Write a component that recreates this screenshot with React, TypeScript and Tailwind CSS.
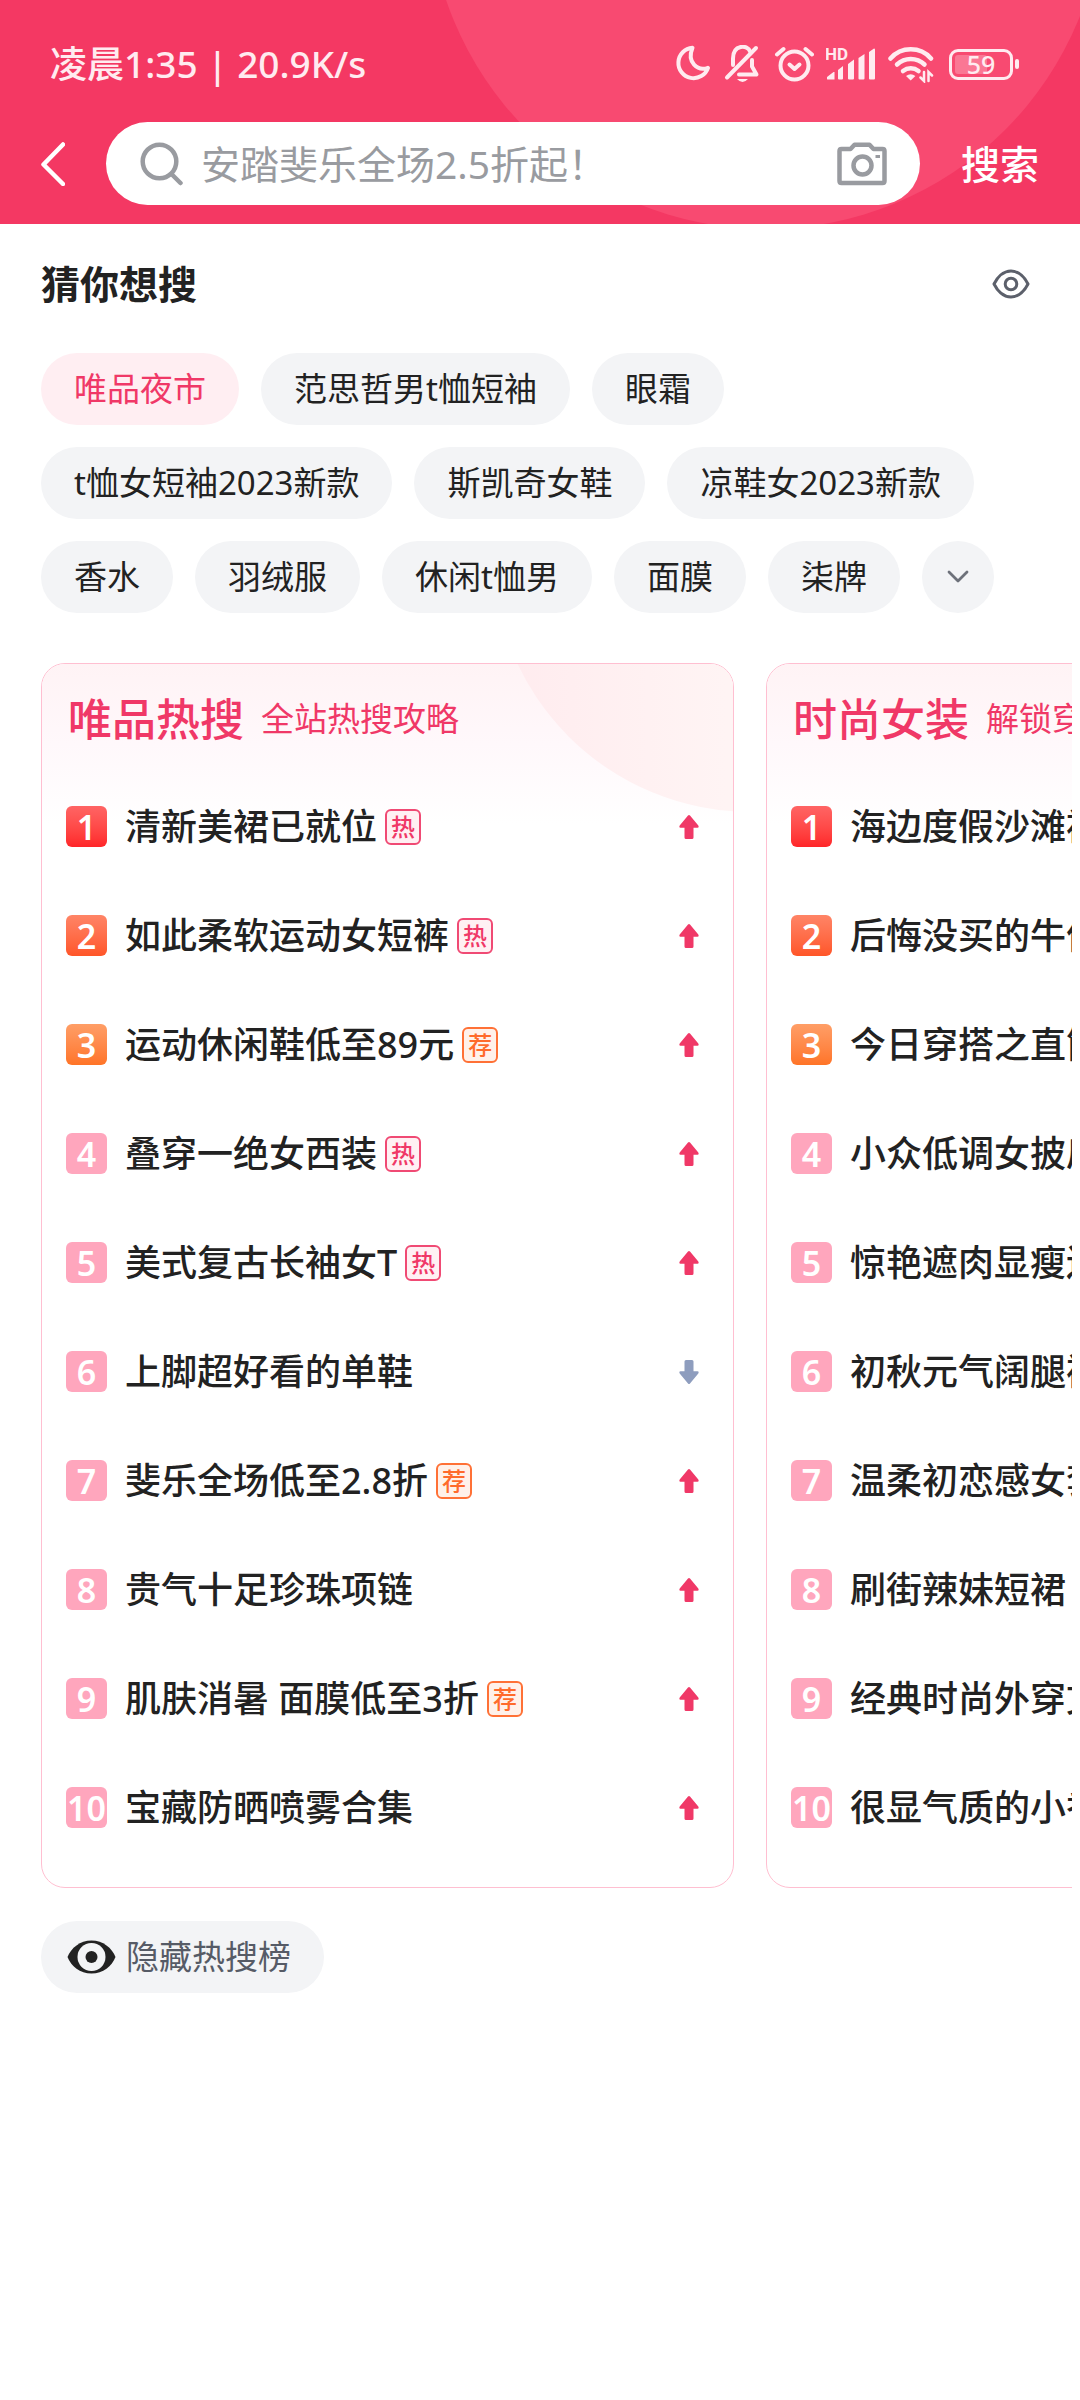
import React from "react";

type Tag = "热" | "荐";

interface HotItem {
  text: string;
  tag?: Tag;
  down?: boolean;
}

interface HotBoard {
  title: string;
  subtitle: string;
  items: HotItem[];
}

const suggestions: string[] = [
  "唯品夜市",
  "范思哲男t恤短袖",
  "眼霜",
  "t恤女短袖2023新款",
  "斯凯奇女鞋",
  "凉鞋女2023新款",
  "香水",
  "羽绒服",
  "休闲t恤男",
  "面膜",
  "柒牌",
];

const boards: HotBoard[] = [
  {
    title: "唯品热搜",
    subtitle: "全站热搜攻略",
    items: [
      { text: "清新美裙已就位", tag: "热" },
      { text: "如此柔软运动女短裤", tag: "热" },
      { text: "运动休闲鞋低至89元", tag: "荐" },
      { text: "叠穿一绝女西装", tag: "热" },
      { text: "美式复古长袖女T", tag: "热" },
      { text: "上脚超好看的单鞋", down: true },
      { text: "斐乐全场低至2.8折", tag: "荐" },
      { text: "贵气十足珍珠项链" },
      { text: "肌肤消暑 面膜低至3折", tag: "荐" },
      { text: "宝藏防晒喷雾合集" },
    ],
  },
  {
    title: "时尚女装",
    subtitle: "解锁穿搭攻略",
    items: [
      { text: "海边度假沙滩裙" },
      { text: "后悔没买的牛仔裤" },
      { text: "今日穿搭之直筒裤" },
      { text: "小众低调女披肩" },
      { text: "惊艳遮肉显瘦连衣裙" },
      { text: "初秋元气阔腿裤" },
      { text: "温柔初恋感女套装" },
      { text: "刷街辣妹短裙" },
      { text: "经典时尚外穿文胸" },
      { text: "很显气质的小香风" },
    ],
  },
];

const rankColors = [
  "bg-linear-to-b from-[#ff6464] to-[#ff2428]",
  "bg-linear-to-b from-[#ff8466] to-[#ff5527]",
  "bg-linear-to-b from-[#ff9e66] to-[#ff7426]",
];

function StatusIcons() {
  return (
    <div className="flex items-center gap-3 text-[#ffebf0]">
      <svg width="38" height="38" viewBox="0 0 38 38" fill="none" stroke="currentColor" strokeWidth="4" strokeLinejoin="round" aria-label="勿扰模式">
        <path d="M18.5 2.8A15.2 15.2 0 1 0 34 22.8C23.5 26.500 12.500 17.500 18.500 2.800Z" />
      </svg>
      <svg width="37" height="38" viewBox="0 0 37 38" fill="none" stroke="currentColor" strokeWidth="4" strokeLinecap="round" strokeLinejoin="round" aria-label="静音">
        <path d="M9 20V13.500C9 -1 24 -0.500 26 6.500" />
        <path d="M32 3 3 32.500" />
        <path d="M28 15V21.500L32.500 29.500H15" />
        <path d="M13 34H24Q18.500 40 13 34Z" fill="currentColor" stroke="none" />
      </svg>
      <svg width="41" height="38" viewBox="0 0 41 38" fill="none" stroke="currentColor" strokeWidth="4" strokeLinecap="round" strokeLinejoin="round" aria-label="闹钟">
        <circle cx="21.500" cy="20.500" r="14" />
        <path d="M16.500 19.500 21.500 24 26.500 19.500" />
        <path d="M4 9.500 10.500 4M39 9.500 32.500 4" />
      </svg>
      <svg width="50" height="38" viewBox="0 0 50 38" fill="currentColor" aria-label="信号">
        <text x="-1" y="15" fontSize="17" fontWeight="700" fontFamily="Roboto, sans-serif">HD</text>
        <path d="M1 34V32L7.500 27H8.500V34.500H2Q1 34.500 1 34ZM12 25 17 21V33.500Q17 34.500 16 34.500H13Q12 34.500 12 33.500ZM22 19 28 14.500V33.500Q28 34.500 27 34.500H23Q22 34.500 22 33.500ZM32.500 13 38.500 9V33.500Q38.500 34.500 37.500 34.500H33.500Q32.500 34.500 32.500 33.500ZM43 7 48 3.500Q49 3.500 49 4.500V33.500Q49 34.500 48 34.500H44Q43 34.500 43 33.500Z" />
      </svg>
      <svg width="49" height="38" viewBox="0 0 49 38" fill="none" stroke="currentColor" strokeWidth="4.500" strokeLinecap="round" aria-label="无线网络">
        <path d="M2.500 13.500A27 27 0 0 1 43 13.500" />
        <path d="M9 19.500A20 20 0 0 1 36.500 19.500" />
        <path d="M15 26A12.500 12.500 0 0 1 30.500 26" />
        <path d="M22.700 35.500 18 31Q22.700 27.500 27.400 31Z" fill="currentColor" stroke="none" />
        <path d="M36 27V36L32.500 32.500M40.500 36V27L44 30.500" strokeWidth="2.500" />
      </svg>
      <div className="flex items-center gap-[2px]" aria-label="电量 59%">
        <div className="relative flex h-[31px] w-[64px] items-center justify-center rounded-[9px] border-3 border-current">
          <span className="absolute inset-y-[3px] left-[3px] w-[32px] rounded-[3px] bg-white/25" />
          <span className="relative text-[25px] leading-none font-medium">59</span>
        </div>
        <span className="h-[10px] w-1 rounded-xs bg-current" />
      </div>
    </div>
  );
}

function TrendArrow({ down }: { down?: boolean }) {
  return (
    <svg
      width="20"
      height="24"
      viewBox="0 0 20 24"
      className={down ? "shrink-0 rotate-180 text-[#8e9dbe]" : "shrink-0 text-[#f03867]"}
      fill="currentColor"
      aria-label={down ? "下降" : "上升"}
    >
      <path d="M9 0.600Q10 -0.400 11 0.600L19.300 10.500Q20.300 12.500 18.500 12.700H14.500V22.500Q14.500 24 13 24H7Q5.500 24 5.500 22.500V12.700H1.500Q-0.300 12.500 0.700 10.500Z" />
    </svg>
  );
}

function TagBadge({ tag }: { tag: Tag }) {
  return (
    <span
      className={
        tag === "热"
          ? "flex size-9 shrink-0 items-center justify-center rounded-md border-2 border-[#f04a74] bg-[#fff0f3] text-[24px] leading-none font-medium text-[#f03867]"
          : "flex size-9 shrink-0 items-center justify-center rounded-md border-2 border-[#ff7136] bg-[#fff1ea] text-[24px] leading-none font-medium text-[#ff6a2b]"
      }
    >
      {tag}
    </span>
  );
}

function BoardCard({ board }: { board: HotBoard }) {
  return (
    <section className="relative w-[calc(100%-338px)] shrink-0 overflow-hidden rounded-3xl border border-[#ffbfd1] bg-white px-6 pt-[31px] pb-[25px]">
      <div className="absolute inset-x-0 top-0 h-40 bg-linear-to-b from-[#fff3f5] via-[#fff8fb] to-white" />
      <div className="absolute -top-[368px] -right-[276px] size-[516px] rounded-full bg-linear-to-r from-[#ffebee] to-[#fff4f4] to-45%" />
      <h2 className="relative flex items-center gap-[17px] pl-[2px] leading-12 whitespace-nowrap text-[#f03867]">
        <span className="text-[44px] font-medium">{board.title}</span>
        <span className="text-[33px] font-normal">{board.subtitle}</span>
      </h2>
      <ol className="relative mt-[29px]">
        {board.items.map((item, i) => (
          <li key={item.text}>
            <a href="#" className="flex h-[109px] items-center pr-[10px]">
              <span
                className={`flex size-[41px] shrink-0 items-center justify-center rounded-md text-[34px] leading-none font-semibold text-white ${
                  rankColors[i] ?? "bg-[#ffa6bd]"
                }`}
              >
                {i + 1}
              </span>
              <span className="ml-[18px] text-[36px] leading-12 font-medium whitespace-nowrap text-[#222]">{item.text}</span>
              <span className="ml-2 flex flex-1">{item.tag && <TagBadge tag={item.tag} />}</span>
              <TrendArrow down={item.down} />
            </a>
          </li>
        ))}
      </ol>
    </section>
  );
}

export default function App() {
  return (
    <div className="min-h-screen bg-white font-['Noto_Sans','Noto_Sans_CJK_SC',sans-serif] text-[#222]" lang="zh-CN">
      <header className="relative overflow-hidden bg-[#f43863] pb-[19px]">
        <div className="absolute -top-[447px] left-[428px] size-[676px] rounded-full bg-[#f84a71]" />
        <div className="relative flex items-center justify-between pt-10 pr-[61px] pl-[50px]">
          <p className="text-[37px] leading-12 font-medium text-[#ffebf0]">凌晨1:35 | 20.9K/s</p>
          <StatusIcons />
        </div>
        <form className="relative mt-[34px] flex items-center gap-[41px] pr-[41px] pl-[41px]" onSubmit={(e) => e.preventDefault()}>
          <button type="button" aria-label="返回">
            <svg width="24" height="44" viewBox="0 0 24 44" fill="none" stroke="white" strokeWidth="4.500" strokeLinecap="round" strokeLinejoin="round">
              <path d="M22 2.500 2.500 22.500 22 42" />
            </svg>
          </button>
          <div className="flex h-[83px] min-w-0 flex-1 items-center rounded-full bg-white pr-[33px] pl-[34px] text-[#999ba0]">
            <svg width="44" height="44" viewBox="0 0 44 44" fill="none" stroke="currentColor" strokeWidth="4.500" strokeLinecap="round" aria-hidden="true">
              <circle cx="19.500" cy="19.500" r="16.800" />
              <path d="M31.500 32 40.500 41" />
            </svg>
            <input
              type="text"
              aria-label="搜索商品"
              placeholder="安踏斐乐全场2.5折起！"
              className="ml-[17px] min-w-0 flex-1 text-[39px] leading-[56px] text-[#222] outline-none placeholder:text-[#999ba0]"
            />
            <button type="button" aria-label="拍照搜索">
              <svg width="50" height="44" viewBox="0 0 50 44" fill="none" stroke="currentColor" strokeWidth="4.500" strokeLinejoin="round">
                <path d="M4.500 7H13.500L17.500 2.800H32.500L36.500 7H45.500Q47.500 7 47.500 9V39Q47.500 41 45.500 41H4.500Q2.500 41 2.500 39V9Q2.500 7 4.500 7Z" />
                <circle cx="25.500" cy="23.500" r="9" />
                <path d="M38.500 14.500H43" strokeWidth="3" />
              </svg>
            </button>
          </div>
          <button type="submit" className="text-[39px] leading-[56px] font-medium text-white">
            搜索
          </button>
        </form>
      </header>

      <main>
        <section className="px-[41px] pt-8">
          <div className="flex items-center justify-between pr-[9px]">
            <h1 className="text-[39px] leading-[56px] font-bold">猜你想搜</h1>
            <button type="button" aria-label="显示或隐藏推荐">
              <svg width="38" height="30" viewBox="0 0 38 30" fill="none" stroke="#5c606b" strokeWidth="3" strokeLinejoin="round">
                <path d="M2 15C5 9 11 2 19 2S33 9 36 15C33 21 27 28 19 28S5 21 2 15Z" />
                <circle cx="19" cy="15" r="5.800" />
              </svg>
            </button>
          </div>
          <div className="mt-[41px] flex flex-wrap gap-[22px]">
            {suggestions.map((s, i) => (
              <a
                key={s}
                href="#"
                className={
                  i === 0
                    ? "flex h-[72px] items-center rounded-full bg-[#ffeef2] px-[33px] text-[33px] leading-12 whitespace-nowrap text-[#f03867]"
                    : "flex h-[72px] items-center rounded-full bg-[#f3f4f6] px-[33px] text-[33px] leading-12 whitespace-nowrap"
                }
              >
                {s}
              </a>
            ))}
            <button type="button" aria-label="展开更多" className="flex size-[72px] items-center justify-center rounded-full bg-[#f3f4f6]">
              <svg width="22" height="14" viewBox="0 0 22 14" fill="none" stroke="#6d717a" strokeWidth="2.800" strokeLinecap="round" strokeLinejoin="round">
                <path d="M2 2 11 11 20 2" />
              </svg>
            </button>
          </div>
        </section>

        <div className="mt-[50px] mr-2 ml-[41px] flex gap-8 overflow-hidden">
          {boards.map((b) => (
            <BoardCard key={b.title} board={b} />
          ))}
        </div>

        <button type="button" className="mt-[33px] ml-[41px] flex h-[72px] items-center gap-[10px] rounded-full bg-[#f3f4f6] pr-[33px] pl-[26px] text-[33px] leading-12 text-[#565b66]">
          <svg width="49" height="34" viewBox="0 0 49 34" aria-hidden="true">
            <path d="M0.500 17C4 8 13 0.500 24.500 0.500S45 8 48.500 17C45 26 36 33.500 24.500 33.500S4 26 0.500 17Z" fill="#222" />
            <circle cx="24.500" cy="17" r="14" fill="#f3f4f6" />
            <circle cx="24.500" cy="17" r="6" fill="#222" />
          </svg>
          隐藏热搜榜
        </button>
      </main>
    </div>
  );
}
